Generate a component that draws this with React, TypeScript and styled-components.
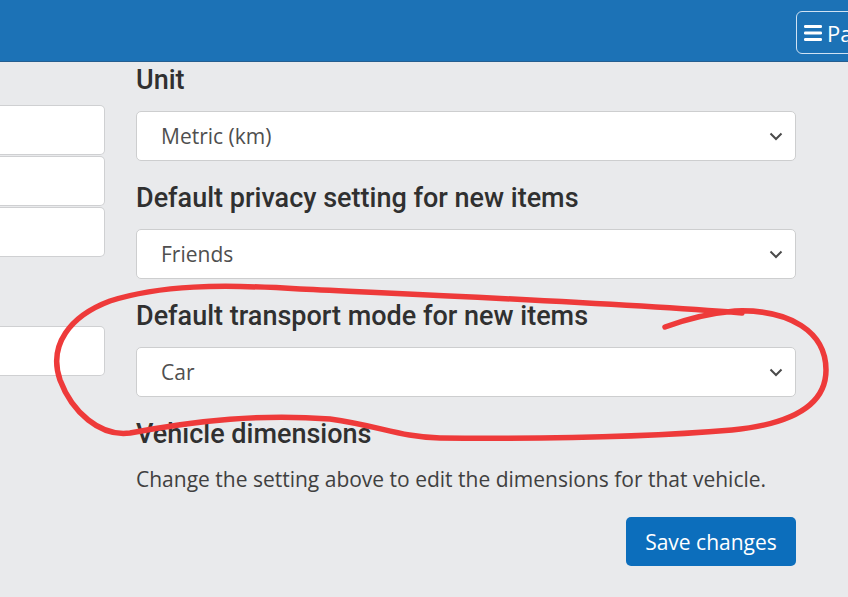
import React from "react";
import styled, { createGlobalStyle } from "styled-components";

const Global = createGlobalStyle`
  html, body { margin: 0; padding: 0; background: #e9eaec; overflow: hidden; }
  body { width: 848px; height: 597px; font-family: "Open Sans", "Liberation Sans", sans-serif; }
  * { box-sizing: border-box; }
`;

const Page = styled.div`
  position: relative;
  width: 848px;
  height: 597px;
  overflow: hidden;
`;

const Header = styled.header`
  height: 62px;
  background: #1c72b6;
  border-bottom: 1px solid #255e90;
  display: flex;
  align-items: center;
  justify-content: flex-end;
  padding-top: 4px;
`;

const MenuButton = styled.button`
  margin-right: -60px;
  height: 43px;
  width: 112px;
  border: 1.5px solid #cfe2f3;
  border-radius: 6px;
  background: transparent;
  color: #fff;
  display: flex;
  align-items: center;
  gap: 4px;
  padding: 0 0 0 6px;
  font-family: "Open Sans", "Liberation Sans", sans-serif;
  font-size: 22px;
  white-space: nowrap;
`;

const Main = styled.main`
  display: flex;
  gap: 31px;
  padding-top: 2px;
`;

const LeftColumn = styled.div`
  width: 105px;
  flex: none;
  display: flex;
  flex-direction: column;
  padding-top: 41px;
`;

const LeftInput = styled.div<{ $gap?: number }>`
  height: 50px;
  background: #fff;
  border: 1px solid #cfd0d2;
  border-left: none;
  border-radius: 0 5px 5px 0;
  margin-top: ${(p) => p.$gap ?? 0}px;
`;

const RightColumn = styled.div`
  width: 660px;
  flex: none;
  display: flex;
  flex-direction: column;
`;

const Label = styled.div`
  font-family: Roboto, "Liberation Sans", sans-serif;
  font-weight: 500;
  font-size: 27px;
  line-height: 32px;
  color: #303030;
  margin-bottom: 15px;
  white-space: nowrap;
`;

const SelectBox = styled.div`
  height: 50px;
  background: #fff;
  border: 1px solid #cdcecf;
  border-radius: 5px;
  display: flex;
  align-items: center;
  justify-content: space-between;
  padding: 0 12px 0 24px;
  font-size: 21px;
  color: #4f4f4f;
  margin-bottom: 21px;
`;

const Heading = styled(Label)`
  margin-bottom: 14px;
`;

const Paragraph = styled.p`
  margin: 0 0 23px;
  font-size: 21px;
  line-height: 30px;
  color: #404040;
  white-space: nowrap;
`;

const Actions = styled.div`
  display: flex;
  justify-content: flex-end;
`;

const SaveButton = styled.button`
  height: 49px;
  width: 170px;
  border: none;
  border-radius: 5px;
  background: #0c6ebc;
  color: #fff;
  font-family: "Open Sans", "Liberation Sans", sans-serif;
  font-size: 21px;
`;

const Annotation = styled.svg`
  position: absolute;
  left: 0;
  top: 0;
  pointer-events: none;
`;

const Chevron = () => (
  <svg width="14" height="9" viewBox="0 0 14 9">
    <path d="M1.5 1.5 L7 7 L12.5 1.5" fill="none" stroke="#4a4a4a" strokeWidth="2" />
  </svg>
);

const Hamburger = () => (
  <svg width="20" height="18" viewBox="0 0 20 18">
    <rect x="1" y="1" width="18" height="3" rx="1.2" fill="#fff" />
    <rect x="1" y="7.5" width="18" height="3" rx="1.2" fill="#fff" />
    <rect x="1" y="14" width="18" height="3" rx="1.2" fill="#fff" />
  </svg>
);

const Select = ({ value }: { value: string }) => (
  <SelectBox>
    <span>{value}</span>
    <Chevron />
  </SelectBox>
);

export default function App() {
  return (
    <Page>
      <Global />
      <Header>
        <MenuButton>
          <Hamburger />
          Page
        </MenuButton>
      </Header>
      <Main>
        <LeftColumn>
          <LeftInput />
          <LeftInput $gap={1} />
          <LeftInput $gap={1} />
          <LeftInput $gap={69} />
        </LeftColumn>
        <RightColumn>
          <Label>Unit</Label>
          <Select value="Metric (km)" />
          <Label>Default privacy setting for new items</Label>
          <Select value="Friends" />
          <Label>Default transport mode for new items</Label>
          <Select value="Car" />
          <Heading>Vehicle dimensions</Heading>
          <Paragraph>Change the setting above to edit the dimensions for that vehicle.</Paragraph>
          <Actions>
            <SaveButton>Save changes</SaveButton>
          </Actions>
        </RightColumn>
      </Main>
      <Annotation width="848" height="597" viewBox="0 0 848 597">
        <path
          d="M 665 327 Q 700 314 735 311 C 790 309 826 332 826 370 C 826 405 792 424 732 430 C 650 437 560 439 440 438 C 400 437 380 426 330 419 C 260 414 200 420 130 433 C 100 437 72 412 60 380 C 48 345 70 316 110 301 C 160 285 220 284 300 289 C 450 296 600 302 742 313"
          fill="none"
          stroke="#ee3a3a"
          strokeWidth="5.5"
          strokeLinecap="round"
          strokeLinejoin="round"
        />
      </Annotation>
    </Page>
  );
}
